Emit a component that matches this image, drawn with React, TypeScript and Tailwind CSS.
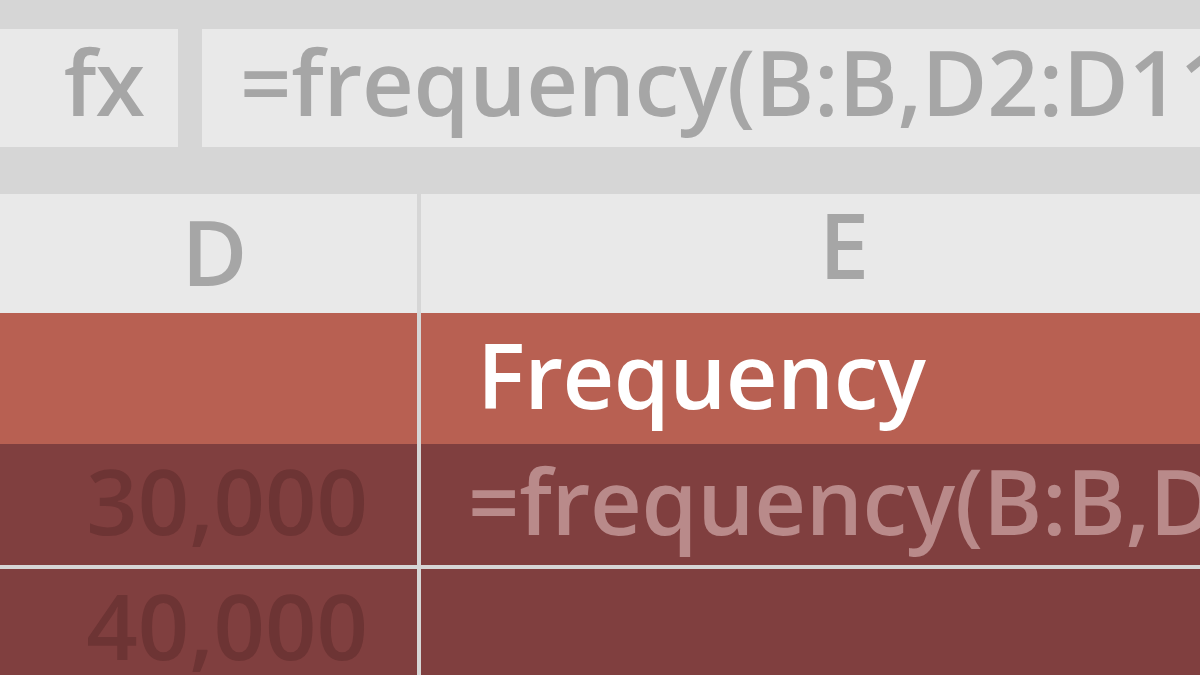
export default function App() {
  return (
    <div
      className="w-[1200px] h-[675px] overflow-hidden bg-[#d6d6d6] flex flex-col"
      style={{ fontFamily: '"Open Sans", "Noto Sans", sans-serif' }}
    >
      {/* formula bar */}
      <div className="h-[194px] pt-[29px] flex gap-[24px]">
        <div className="w-[178px] h-[118px] bg-[#e9e9e9] flex items-center justify-end pr-[34px] text-[#a6a6a6] text-[90px] font-semibold leading-none tracking-[-1px]">
          <span className="-mt-[14px]">fx</span>
        </div>
        <div className="flex-1 h-[118px] bg-[#e9e9e9] flex items-center pl-[38px] overflow-hidden whitespace-nowrap text-[#a6a6a6] text-[90px] font-semibold leading-none tracking-[-0.3px]">
          <span className="-mt-[14px]">=frequency(B:B,D2:D11)</span>
        </div>
      </div>

      {/* sheet */}
      <div className="flex-1 grid grid-cols-[417px_1fr] grid-rows-[119px_131px_121px_1fr] gap-x-[4px] bg-[#d6d6d6]">
        <div className="bg-[#e9e9e9] flex items-center justify-center text-[#a6a6a6] text-[90px] font-semibold leading-none">
          <span className="-mt-[6px] ml-[12px]">D</span>
        </div>
        <div className="bg-[#e9e9e9] flex items-center text-[#a6a6a6] text-[90px] font-semibold leading-none">
          <span className="ml-[398px] -mt-[20px]">E</span>
        </div>

        <div className="bg-[#b86052]" />
        <div className="bg-[#b86052] flex items-center pl-[56px] text-white text-[90px] font-semibold leading-none whitespace-nowrap tracking-[-0.6px]">
          <span className="-mt-[10px]">Frequency</span>
        </div>

        <div className="bg-[#803f3f] flex items-center justify-end pr-[49px] text-[#6d3434] text-[90px] font-semibold leading-none">
          <span className="-mt-[10px]">30,000</span>
        </div>
        <div className="bg-[#803f3f] flex items-center pl-[47px] overflow-hidden whitespace-nowrap text-[#b98a8a] text-[90px] font-semibold leading-none tracking-[-0.3px]">
          <span className="-mt-[10px]">=frequency(B:B,D2:D11)</span>
        </div>

        <div className="bg-[#803f3f] mt-[4px] flex items-start justify-end pr-[49px] text-[#6d3434] text-[90px] font-semibold leading-none">
          <span className="mt-[11px]">40,000</span>
        </div>
        <div className="bg-[#803f3f] mt-[4px]" />
      </div>
    </div>
  );
}
